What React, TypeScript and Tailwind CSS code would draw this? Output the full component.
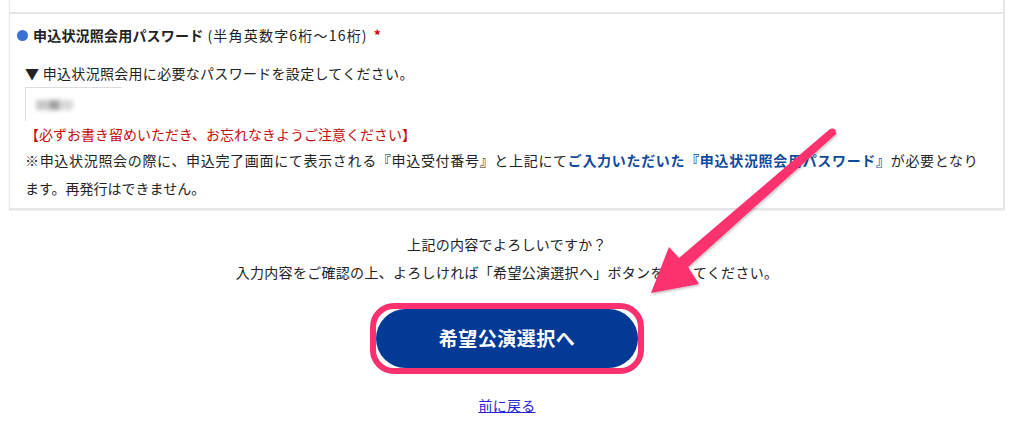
const font = { fontFamily: '"Noto Sans CJK JP", "Noto Sans", sans-serif' };

const Arrow = () => (
  <svg
    className="absolute left-0 top-0 pointer-events-none"
    width={1024}
    height={429}
    viewBox="0 0 1024 429"
  >
    <defs>
      <filter id="sh" x="-20%" y="-20%" width="140%" height="140%">
        <feDropShadow dx="1" dy="1.5" stdDeviation="1.2" floodColor="#000" floodOpacity="0.25" />
      </filter>
    </defs>
    <path
      d="M830 129 Q836 127 836 134 L688 267 L699 284 L651 293 L669 247 L679 258 Z"
      fill="#fb306e"
      filter="url(#sh)"
      strokeLinejoin="round"
    />
  </svg>
);

export default function App() {
  return (
    <div className="relative w-[1024px] h-[429px] bg-white text-[#222] overflow-hidden" style={font}>
      <div className="pl-[9px] pr-[19px]">
        {/* form panel */}
        <div className="border-l border-r-2 border-b-2 border-[#e6e6e6] shadow-[0_1px_1px_rgba(0,0,0,0.05)]">
          <div className="h-[12px]" />
          <div className="border-t-2 border-[#e6e6e6] pt-[9px] pb-[6px]">
            <div className="flex items-center pl-[7px] h-[24px] text-[14px] leading-[24px]">
              <span className="inline-block w-[11px] h-[11px] rounded-full bg-[#3a6fd6] mr-[5px]" />
              <span className="font-bold tracking-[0.2px]">申込状況照会用パスワード</span>
              <span className="ml-[4px] tracking-[1.2px]">(半角英数字6桁〜16桁)</span>
              <span className="ml-[6px] text-[#d40000] font-bold">*</span>
            </div>
            <div className="pl-[15px]">
              <p className="mt-[14px] text-[14px] leading-[24px] tracking-[0.3px]">▼ 申込状況照会用に必要なパスワードを設定してください。</p>
              <div className="mt-[2px] w-[97px] h-[34px] border-l border-t border-[#dcdcdc] flex items-center pl-[10px]">
                <div className="flex blur-[2px]">
                  <span className="w-[14px] h-[10px] bg-[#c8c8c8]" />
                  <span className="w-[9px] h-[10px] bg-[#a0a0a0]" />
                  <span className="w-[14px] h-[10px] bg-[#d8d8d8]" />
                </div>
              </div>
              <p className="mt-[1px] text-[14px] leading-[24px] text-[#c40c0c]">【必ずお書き留めいただき、お忘れなきようご注意ください】</p>
              <p className="text-[14px] leading-[28px]">
                <span className="tracking-[0.68px]">
                  ※申込状況照会の際に、申込完了画面にて表示される『申込受付番号』と上記にて
                  <span className="font-bold text-[#114a9c]">ご入力いただいた『申込状況照会用パスワード』</span>
                  が必要となり
                </span>
                <br />
                ます。再発行はできません。
              </p>
            </div>
          </div>
        </div>

        {/* confirm */}
        <div className="mt-[20px] text-center text-[14px] leading-[28px] tracking-[0.3px]">
          <p>上記の内容でよろしいですか？</p>
          <p>入力内容をご確認の上、よろしければ「希望公演選択へ」ボタンを押してください。</p>
        </div>

        <div className="mt-[17px] flex justify-center">
          <div className="border-[6px] border-[#fb306e] rounded-[24px] bg-white">
            <button className="w-[262px] h-[59px] rounded-full bg-[#033a96] text-white font-bold text-[19px] tracking-[0.5px] flex items-center justify-center">
              希望公演選択へ
            </button>
          </div>
        </div>

        <div className="mt-[21px] text-center text-[14px] leading-[20px]">
          <a href="#" className="text-[#2323d8] underline tracking-[0.3px]">前に戻る</a>
        </div>
      </div>
      <Arrow />
    </div>
  );
}
